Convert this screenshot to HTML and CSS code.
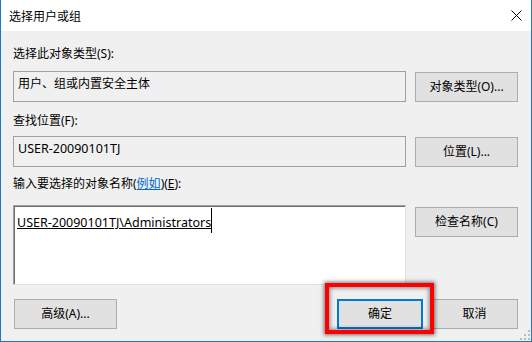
FILE: index.html
```html
<!DOCTYPE html>
<html lang="zh-CN">
<head>
<meta charset="utf-8">
<title>选择用户或组</title>
<link rel="stylesheet" href="styles.css">
</head>
<body>
<div class="window">
  <div class="titlebar">
    <span class="title">选择用户或组</span>
    <svg class="close" width="11" height="11" viewBox="0 0 11 11"><path d="M0.5 0.5 L10.5 10.5 M10.5 0.5 L0.5 10.5" stroke="#000" stroke-width="1" fill="none"/></svg>
  </div>
  <div class="body">
    <div class="label l1">选择此对象类型(S):</div>
    <div class="row">
      <div class="field">用户、组或内置安全主体</div>
      <button class="btn">对象类型(O)...</button>
    </div>
    <div class="label l2">查找位置(F):</div>
    <div class="row">
      <div class="field latin">USER-20090101TJ</div>
      <button class="btn">位置(L)...</button>
    </div>
    <div class="label l3">输入要选择的对象名称(<span class="link">例如</span>)(<u>E</u>):</div>
    <div class="row">
      <div class="textarea latin"><span class="name">USER-20090101TJ\Administrators</span></div>
      <button class="btn b3">检查名称(C)</button>
    </div>
    <div class="footer">
      <button class="btn adv">高级(A)...</button>
      <div class="spacer"></div>
      <div class="ok-wrap">
        <button class="btn ok">确定</button>
        <div class="highlight"></div>
      </div>
      <button class="btn cancel">取消</button>
    </div>
  </div>
  <svg class="grip" width="10" height="10" viewBox="0 0 10 10">
    <rect x="8" y="0" width="2" height="2" fill="#bcbcbc"/>
    <rect x="4" y="4" width="2" height="2" fill="#bcbcbc"/>
    <rect x="8" y="4" width="2" height="2" fill="#bcbcbc"/>
    <rect x="0" y="8" width="2" height="2" fill="#bcbcbc"/>
    <rect x="4" y="8" width="2" height="2" fill="#bcbcbc"/>
    <rect x="8" y="8" width="2" height="2" fill="#bcbcbc"/>
  </svg>
</div>
</body>
</html>
```
FILE: styles.css
```css
* { box-sizing: border-box; }
html, body { margin: 0; padding: 0; background: #ffffff; }
body {
  font-family: "Noto Sans", "Noto Sans CJK SC", sans-serif;
  font-size: 12px;
  color: #000;
}
.window {
  position: relative;
  width: 532px;
  height: 342px;
  background: #f0f0f0;
  border-left: 1px solid #1979ca;
  border-right: 1px solid #1979ca;
  border-bottom: 1px solid #1979ca;
  display: flex;
  flex-direction: column;
}
.titlebar {
  height: 31px;
  background: #ffffff;
  display: flex;
  align-items: center;
  justify-content: space-between;
  padding: 0 9px 0 8px;
  flex: none;
}
.title {
  font-family: "Noto Sans CJK SC", sans-serif;
  font-size: 12px;
  line-height: 16px;
}
.close { display: block; }
.body {
  padding: 15px 13px 0 12px;
  display: flex;
  flex-direction: column;
}
.label {
  line-height: 16px;
  height: 16px;
  white-space: nowrap;
}
.l1 { margin-bottom: 9px; }
.l2 { margin-top: 11px; margin-bottom: 7px; }
.l3 { margin-top: 9px; margin-bottom: 13px; }
.link { color: #0066cc; text-decoration: underline; }
.latin { font-size: 12.5px; }
.row {
  display: flex;
  align-items: flex-start;
  gap: 9px;
}
.field {
  width: 393px;
  height: 31px;
  border: 1px solid #a0a0a0;
  background: #f0f0f0;
  padding: 4px 4px;
  line-height: 16px;
  white-space: nowrap;
}
.textarea {
  width: 393px;
  height: 80px;
  background: #ffffff;
  border: 1px solid;
  border-color: #a0a0a0 #e3e3e3 #e3e3e3 #a0a0a0;
  box-shadow: inset 1px 1px 0 #6d6d6d;
  padding: 9px 3px;
  line-height: 16px;
  white-space: nowrap;
}
.name {
  position: relative;
  text-decoration: underline;
}
.name::after {
  content: "";
  position: absolute;
  right: -1px;
  top: -6px;
  width: 1px;
  height: 25px;
  background: #000;
}
.btn {
  font: inherit;
  color: #000;
  width: 103px;
  height: 30px;
  margin-top: 1px;
  background: #e1e1e1;
  border: 1px solid #adadad;
  padding: 0;
  line-height: 16px;
  text-align: center;
  white-space: nowrap;
  flex: none;
}
.b3 { margin-top: 2px; }
.footer {
  display: flex;
  align-items: flex-start;
  margin-top: 13px;
  gap: 8px;
}
.adv { margin-left: 1px; }
.spacer { flex: 1; }
.ok-wrap { position: relative; }
.ok {
  width: 86px;
  border: 2px solid #0078d7;
}
.cancel { width: 87px; }
.highlight {
  position: absolute;
  left: -12px;
  top: -15px;
  width: 109px;
  height: 51px;
  border: 4px solid #ff0000;
  box-shadow: 0 0 4px 1px rgba(0,0,0,0.55), inset 0 0 4px 1px rgba(0,0,0,0.45);
}
.grip {
  position: absolute;
  right: 1px;
  bottom: 1px;
}
```
